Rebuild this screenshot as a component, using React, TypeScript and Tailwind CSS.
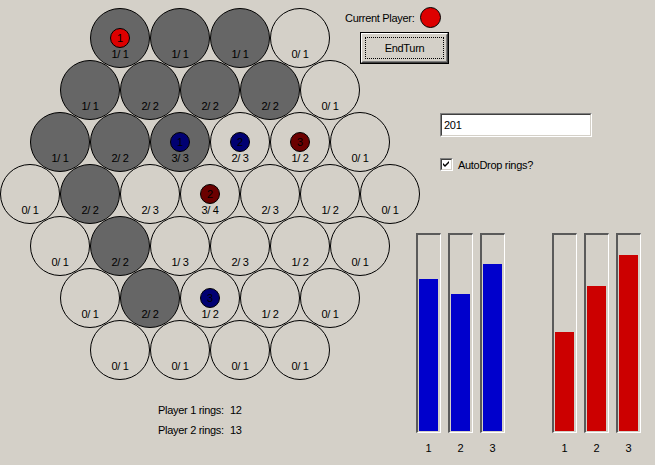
import React from "react";

type Piece = { n: number; c: string };
type Cell = { g: boolean; t: string; p?: Piece };

const RED = "#dd0000";
const DRED = "#6b0000";
const NAVY = "#000072";

const G = (t: string, p?: Piece): Cell => ({ g: true, t, p });
const L = (t: string, p?: Piece): Cell => ({ g: false, t, p });

const rows: Cell[][] = [
  [G("1/ 1", { n: 1, c: RED }), G("1/ 1"), G("1/ 1"), L("0/ 1")],
  [G("1/ 1"), G("2/ 2"), G("2/ 2"), G("2/ 2"), L("0/ 1")],
  [
    G("1/ 1"),
    G("2/ 2"),
    G("3/ 3", { n: 1, c: NAVY }),
    L("2/ 3", { n: 2, c: NAVY }),
    L("1/ 2", { n: 3, c: DRED }),
    L("0/ 1"),
  ],
  [L("0/ 1"), G("2/ 2"), L("2/ 3"), L("3/ 4", { n: 2, c: DRED }), L("2/ 3"), L("1/ 2"), L("0/ 1")],
  [L("0/ 1"), G("2/ 2"), L("1/ 3"), L("2/ 3"), L("1/ 2"), L("0/ 1")],
  [L("0/ 1"), G("2/ 2"), L("1/ 2", { n: 3, c: NAVY }), L("1/ 2"), L("0/ 1")],
  [L("0/ 1"), L("0/ 1"), L("0/ 1"), L("0/ 1")],
];

const blueBars = [152, 137, 167];
const redBars = [99, 145, 176];

function Circle({ cell }: { cell: Cell }) {
  return (
    <div
      className={
        "relative w-[60px] h-[60px] shrink-0 rounded-full border border-black flex flex-col items-center justify-end pb-[7px] " +
        (cell.g ? "bg-[#666666]" : "bg-transparent")
      }
    >
      {cell.p && (
        <div
          className="absolute left-1/2 top-1/2 -translate-x-1/2 -translate-y-1/2 w-[20px] h-[20px] rounded-full border border-black flex items-center justify-center text-[11px] leading-none text-black"
          style={{ backgroundColor: cell.p.c }}
        >
          {cell.p.n}
        </div>
      )}
      <span className="relative leading-[12px] text-black whitespace-pre">{cell.t}</span>
    </div>
  );
}

function Bar({ h, color }: { h: number; color: string }) {
  return (
    <div className="flex flex-col items-center">
      <div className="w-[25px] h-[200px] border-t-2 border-l-2 border-t-[#5a5a5a] border-l-[#5a5a5a] border-r border-b border-r-white border-b-white pl-[1px] pr-[2px] pb-[1px] flex items-end">
        <div className={"w-full " + color} style={{ height: h }} />
      </div>
    </div>
  );
}

function BarLabels() {
  return (
    <div className="flex gap-[7px] mt-[9px]">
      {["1", "2", "3"].map((n) => (
        <div key={n} className="w-[25px] text-center leading-[12px]">
          {n}
        </div>
      ))}
    </div>
  );
}

export default function App() {
  return (
    <div className="w-[655px] h-[465px] bg-[#d4d0c8] overflow-hidden flex font-['Liberation_Sans',Arial,sans-serif] text-[11px] tracking-[-0.3px] text-black">
      {/* Left: board */}
      <div className="w-[420px] shrink-0 flex flex-col">
        <div className="flex flex-col items-center pt-[8px]">
          {rows.map((r, i) => (
            <div key={i} className={"flex " + (i > 0 ? "-mt-[8px]" : "")}>
              {r.map((c, j) => (
                <Circle key={j} cell={c} />
              ))}
            </div>
          ))}
        </div>
        <div className="ml-[158px] mt-[24px] flex flex-col gap-[8px]">
          <div className="flex leading-[12px]">
            <span className="w-[72px]">Player 1 rings:</span>
            <span>12</span>
          </div>
          <div className="flex leading-[12px]">
            <span className="w-[72px]">Player 2 rings:</span>
            <span>13</span>
          </div>
        </div>
      </div>

      {/* Right: controls */}
      <div className="flex-1 flex flex-col">
        <div className="-ml-[75px] mt-[7px] flex items-center h-[21px]">
          <span className="w-[75px] leading-[12px]">Current Player:</span>
          <div className="w-[21px] h-[21px] rounded-full bg-[#dd0000] border border-black" />
        </div>

        <div className="-ml-[60px] mt-[4px] w-[89px] h-[32px] border border-black">
          <div className="w-full h-full border border-t-white border-l-white border-r-[#404040] border-b-[#404040]">
            <div className="w-full h-full border border-t-[#d4d0c8] border-l-[#d4d0c8] border-r-[#808080] border-b-[#808080] p-[2px]">
              <div className="w-full h-full border border-dotted border-black flex items-center justify-center leading-none">
                EndTurn
              </div>
            </div>
          </div>
        </div>

        <div className="ml-[20px] mt-[49px] w-[152px] h-[24px] border border-t-[#808080] border-l-[#808080] border-r-white border-b-white">
          <div className="w-full h-full border border-t-[#404040] border-l-[#404040] border-r-[#d4d0c8] border-b-[#d4d0c8] bg-white flex items-center pl-[2px] leading-none">
            201
          </div>
        </div>

        <div className="ml-[20px] mt-[21px] h-[13px] flex items-center gap-[5px]">
          <div className="w-[13px] h-[13px] border border-t-[#808080] border-l-[#808080] border-r-white border-b-white">
            <div className="w-full h-full border border-t-[#404040] border-l-[#404040] border-r-[#d4d0c8] border-b-[#d4d0c8] bg-white flex items-center justify-center">
              <svg width="7" height="7" viewBox="0 0 7 7">
                <path d="M0 2 L2 4 L6 0 L6 2 L2 6 L0 4 Z" fill="black" />
              </svg>
            </div>
          </div>
          <span className="leading-[12px]">AutoDrop rings?</span>
        </div>

        <div className="-ml-[4px] mt-[62px] flex gap-[47px]">
          <div className="flex flex-col">
            <div className="flex gap-[7px]">
              {blueBars.map((h, i) => (
                <Bar key={i} h={h} color="bg-[#0000cc]" />
              ))}
            </div>
            <BarLabels />
          </div>
          <div className="flex flex-col">
            <div className="flex gap-[7px]">
              {redBars.map((h, i) => (
                <Bar key={i} h={h} color="bg-[#cc0000]" />
              ))}
            </div>
            <BarLabels />
          </div>
        </div>
      </div>
    </div>
  );
}
